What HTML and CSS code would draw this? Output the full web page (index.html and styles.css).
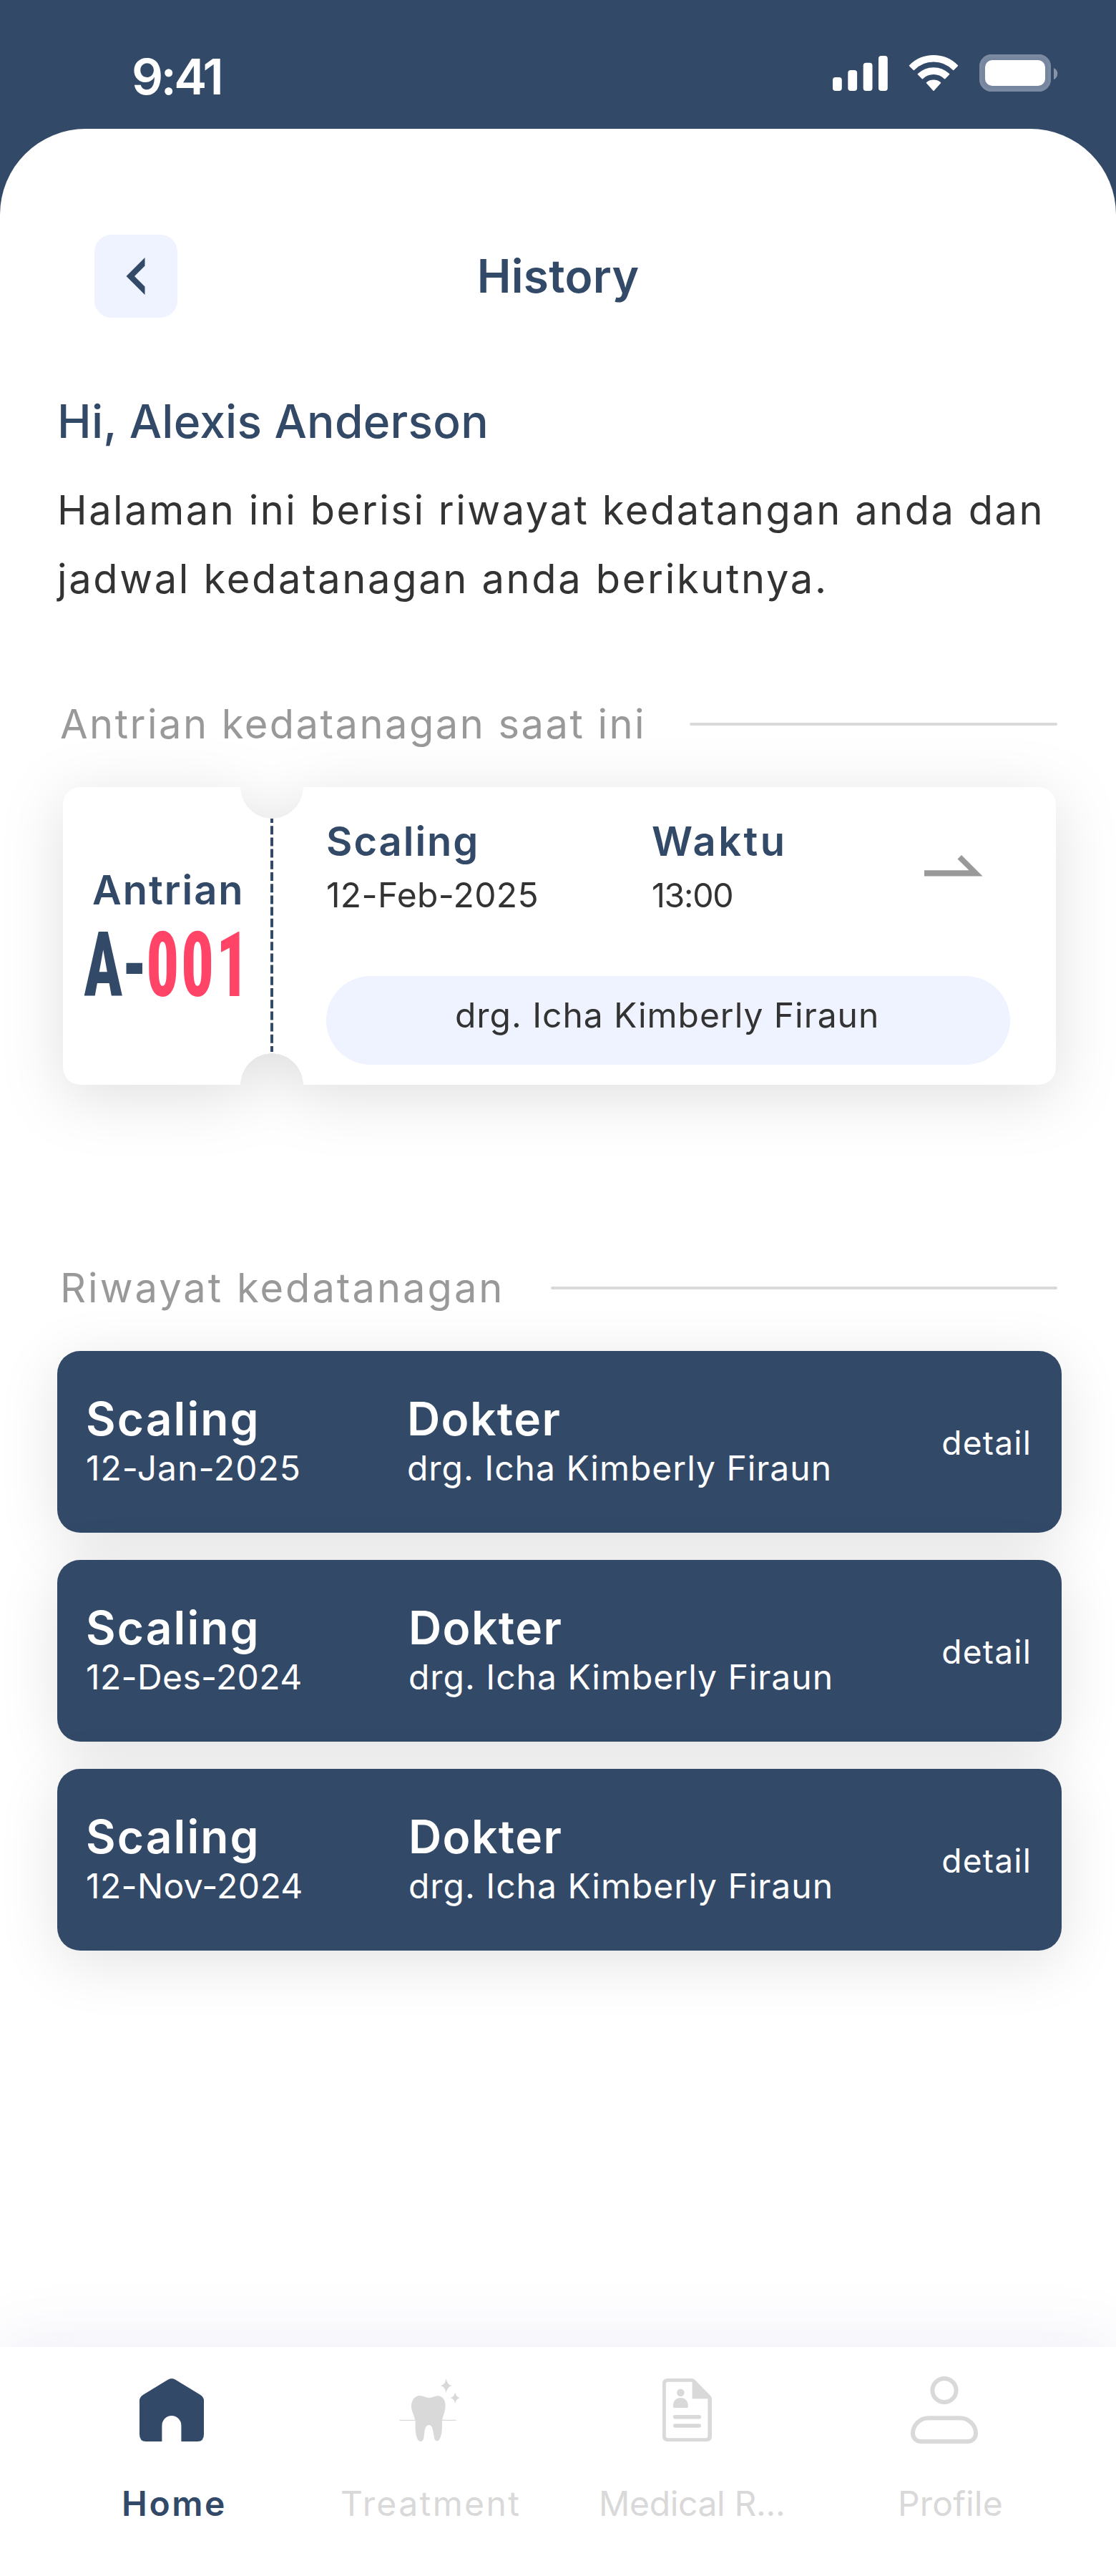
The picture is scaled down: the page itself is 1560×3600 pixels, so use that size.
FILE: index.html
```html
<!DOCTYPE html>
<html lang="id">
<head>
<meta charset="utf-8">
<title>History</title>
<link rel="stylesheet" href="styles.css">
</head>
<body>
<div class="screen">
  <header class="statusbar">
    <span class="clock">9:41</span>
    <div class="status-icons">
      <svg width="77" height="49" viewBox="0 0 77 49" fill="#fff">
        <rect x="0" y="30" width="12.8" height="19" rx="4"/>
        <rect x="21.3" y="20" width="12.8" height="29" rx="4"/>
        <rect x="42.7" y="9.8" width="12.8" height="39.2" rx="4"/>
        <rect x="64" y="0" width="12.8" height="49" rx="4"/>
      </svg>
      <svg width="70" height="51" viewBox="0 0 70 51" fill="#fff" stroke="#fff" stroke-width="1.6" stroke-linejoin="round">
        <path d="M1.6 14.8A47 47 0 0 1 68.4 14.8L62.7 20.4A38.5 38.5 0 0 0 7.3 20.4Z"/>
        <path d="M13.5 26.6A31 31 0 0 1 56.5 26.6L50.6 32.6A22.5 22.5 0 0 0 19.4 32.6Z"/>
        <path d="M25.6 38.6A15 15 0 0 1 44.4 38.6L35 49.2Z"/>
      </svg>
      <svg width="110" height="52" viewBox="0 0 110 52">
        <rect width="100" height="52" rx="17" fill="#76869e"/>
        <rect x="2" y="2" width="96" height="48" rx="15" fill="none" stroke="#7b8aa2" stroke-width="4"/>
        <rect x="8" y="8" width="84" height="36" rx="10" fill="#fff"/>
        <path d="M104 19C111 22 111 32 104 35.3Z" fill="#8793a8"/>
      </svg>
    </div>
  </header>

  <main class="sheet">
    <div class="topbar">
      <button class="back" aria-label="Kembali">
        <svg width="27" height="52" viewBox="0 0 27 52" fill="#334968"><path d="M26.5 0L0.5 26L26.5 52V40.5L12 26L26.5 11.5Z"/></svg>
      </button>
      <h1 class="title">History</h1>
    </div>

    <h2 class="greeting">Hi, Alexis Anderson</h2>
    <p class="intro">
      <span class="intro-first">Halaman ini berisi riwayat kedatangan anda dan</span>
      <span class="intro-second">jadwal kedatanagan anda berikutnya.</span>
    </p>

    <div class="section-head section-head-current">
      <h3 class="section-title">Antrian kedatanagan saat ini</h3>
      <span class="rule"></span>
    </div>

    <div class="ticket-shadow">
      <section class="ticket">
        <div class="stub">
          <div class="stub-label">Antrian</div>
          <div class="queue">A-<span class="queue-number">001</span></div>
        </div>
        <svg class="perforation" width="4" height="328" viewBox="0 0 4 328"><path d="M2 0V328" stroke="#334968" stroke-width="4" stroke-dasharray="12 4.2" stroke-dashoffset="4"/></svg>
        <div class="ticket-body">
          <div class="ticket-row">
            <div>
              <div class="ticket-label label-scaling">Scaling</div>
              <div class="ticket-value">12-Feb-2025</div>
            </div>
            <div>
              <div class="ticket-label label-waktu">Waktu</div>
              <div class="ticket-value value-time">13:00</div>
            </div>
            <svg class="arrow" width="82" height="30" viewBox="0 0 82 30" fill="#999"><path d="M0 21.2H62.5L46.5 5.6L52 0L81.5 29.4H0Z"/></svg>
          </div>
          <div class="pill">drg. Icha Kimberly Firaun</div>
        </div>
      </section>
    </div>

    <div class="section-head section-head-past">
      <h3 class="section-title section-title-wide">Riwayat kedatanagan</h3>
      <span class="rule"></span>
    </div>

    <div class="visits">
      <article class="visit">
        <div>
          <div class="visit-title visit-scaling">Scaling</div>
          <div class="visit-sub date-jan">12-Jan-2025</div>
        </div>
        <div>
          <div class="visit-title visit-dokter">Dokter</div>
          <div class="visit-sub visit-name">drg. Icha Kimberly Firaun</div>
        </div>
        <a class="detail">detail</a>
      </article>
      <article class="visit visit-wide">
        <div>
          <div class="visit-title visit-scaling">Scaling</div>
          <div class="visit-sub">12-Des-2024</div>
        </div>
        <div>
          <div class="visit-title visit-dokter">Dokter</div>
          <div class="visit-sub visit-name">drg. Icha Kimberly Firaun</div>
        </div>
        <a class="detail">detail</a>
      </article>
      <article class="visit visit-wide">
        <div>
          <div class="visit-title visit-scaling">Scaling</div>
          <div class="visit-sub">12-Nov-2024</div>
        </div>
        <div>
          <div class="visit-title visit-dokter">Dokter</div>
          <div class="visit-sub visit-name">drg. Icha Kimberly Firaun</div>
        </div>
        <a class="detail">detail</a>
      </article>
    </div>

    <nav class="tabs">
      <a class="tab tab-home">
        <span class="tab-icon">
          <svg width="90" height="88" viewBox="0 0 90 88" fill="#334968"><path d="M39.5 1.8Q45 -1.6 50.5 1.8L84.5 22.6Q90 26 90 31V78Q90 88 81 88H58.4V66A13.5 14 0 0 0 31.4 66V88H9Q0 88 0 78V31Q0 26 5.5 22.6Z"/></svg>
        </span>
        <span class="tab-label">Home</span>
      </a>
      <a class="tab tab-treatment">
        <span class="tab-icon">
          <svg width="85" height="88" viewBox="0 0 85 88" fill="#d9d9d9">
            <path d="M.4 58.4H22.6M60 58.4H79.5" stroke="#d9d9d9" stroke-width="1.2"/>
            <path d="M17 38.5C17 30 22 24 29 24C34 24 37 27 42 27C47 27 50 24.3 54 24.3C61 24.3 64.6 31 64.6 38C64.6 46 61 52 60 59.5V66C60 75 58 87.4 53 87.4C49 87.4 48.6 81 48 77C47 71 46 65 41.7 65C37 65 36 71 35.3 75C34.6 81 34.5 88 30 88C24.5 88 22.6 76 22.6 67V59.5C21 51 17 46 17 38.5Z"/>
            <path d="M65.7 0C66.8 6 69 9 73.8 10.1C69 11.4 66.8 14.5 65.7 20.3C64.6 14.5 62.4 11.4 57.5 10.1C62.4 9 64.6 6 65.7 0Z"/>
            <path d="M78.3 19C79.2 23.5 81 26.2 85 27C81 28 79.2 30.6 78.3 35C77.4 30.6 75.4 28 71.4 27C75.4 26.2 77.4 23.5 78.3 19Z"/>
          </svg>
        </span>
        <span class="tab-label">Treatment</span>
      </a>
      <a class="tab tab-medical">
        <span class="tab-icon">
          <svg width="69" height="88" viewBox="0 0 69 88" fill="#d9d9d9">
            <path fill-rule="evenodd" d="M7 0H41.5Q44.5 0 46 2.5L67.5 24.5Q69 26 69 28.5V81Q69 88 62 88H7Q0 88 0 81V7Q0 0 7 0ZM41.6 4.8H7.5Q4.8 4.8 4.8 7.5V80.5Q4.8 83.2 7.5 83.2H60.7Q63.4 83.2 63.4 80.5V28.2H41.6Z"/>
            <circle cx="25.4" cy="19.7" r="5.3"/>
            <path d="M15 37.5C15 31 19.5 27 25.3 27C31 27 35.8 31 35.8 37.5V39.5Q35.8 41 34.3 41H16.5Q15 41 15 39.5Z"/>
            <rect x="15" y="51" width="39" height="5.4" rx="2.4"/>
            <rect x="15" y="63.3" width="39" height="5.4" rx="2.4"/>
          </svg>
        </span>
        <span class="tab-label">Medical R...</span>
      </a>
      <a class="tab tab-profile">
        <span class="tab-icon">
          <svg width="94" height="96" viewBox="0 0 94 96" fill="none" stroke="#d9d9d9" stroke-width="6">
            <circle cx="47" cy="20.5" r="16.6"/>
            <path d="M25 59.2H69C81 59.2 91 69 91 80.5C91 87.5 86 92 79.5 92H14.5C8 92 3 87.5 3 80.5C3 69 13 59.2 25 59.2Z"/>
          </svg>
        </span>
        <span class="tab-label">Profile</span>
      </a>
    </nav>
  </main>
</div>
</body>
</html>
```
FILE: styles.css
```css
* { box-sizing: border-box; }

body {
  margin: 0;
  background: #334968;
  font-family: Inter, "Liberation Sans", sans-serif;
  color: #333;
}

h1, h2, h3, p { margin: 0; }

svg { display: block; flex: none; }

.screen {
  display: flex;
  flex-direction: column;
  width: 1560px;
  height: 3600px;
  overflow: hidden;
  background: #334968;
}

.statusbar {
  display: flex;
  justify-content: space-between;
  height: 180px;
  padding: 67px 81px 0 184px;
}

.clock {
  font-size: 69px;
  font-weight: 600;
  line-height: 80px;
  letter-spacing: -3.5px;
  color: #fff;
}

.status-icons {
  display: flex;
  align-items: center;
  gap: 29px;
  height: 52px;
  margin-top: 9px;
}

.sheet {
  display: flex;
  flex-direction: column;
  flex: 1;
  padding-top: 148px;
  border-radius: 120px 120px 0 0;
  background: #fff;
}

.topbar {
  display: grid;
  grid-template-columns: 116px 1fr 116px;
  align-items: center;
  padding: 0 132px;
}

.back {
  display: flex;
  align-items: center;
  width: 116px;
  height: 116px;
  padding: 0 0 0 44px;
  border: 0;
  border-radius: 24px;
  background: #eff3ff;
}

.title {
  font-size: 64px;
  font-weight: 600;
  line-height: 116px;
  letter-spacing: 0.3px;
  text-align: center;
  color: #334968;
}

.greeting {
  margin: 97px 0 0 80px;
  font-size: 64px;
  font-weight: 500;
  line-height: 96px;
  letter-spacing: 0.26px;
  color: #334968;
}

.intro {
  margin: 28px 0 0 80px;
  font-size: 56px;
  line-height: 96px;
  white-space: nowrap;
}

.intro span { display: block; }
.intro-first { letter-spacing: 2.53px; }
.intro-second { letter-spacing: 2.66px; }

.section-head {
  display: flex;
  align-items: center;
  height: 84px;
  padding: 0 82px 0 84px;
}

.section-head-current { margin-top: 113px; }
.section-head-past { margin-top: 242px; }

.section-title {
  width: 880px;
  font-size: 56px;
  font-weight: 400;
  line-height: 84px;
  letter-spacing: 2.48px;
  white-space: nowrap;
  color: #999;
}

.section-title-wide {
  width: 686px;
  letter-spacing: 3.02px;
}

.rule {
  flex: 1;
  height: 4px;
  border-radius: 2px;
  background: #d9d9d9;
}

.ticket-shadow {
  margin: 46px 84px 0 88px;
  filter: drop-shadow(0 16px 42px rgba(0, 0, 0, 0.125));
}

/* The two half circles are cut out where the stub tears off. */
.ticket {
  display: flex;
  height: 416px;
  border-radius: 24px;
  background: #fff;
  -webkit-mask:
    radial-gradient(circle 44px at 292px 0, transparent 43.5px, #000 44px) top / 100% 50% no-repeat,
    radial-gradient(circle 44px at 292px 100%, transparent 43.5px, #000 44px) bottom / 100% 50% no-repeat;
  mask:
    radial-gradient(circle 44px at 292px 0, transparent 43.5px, #000 44px) top / 100% 50% no-repeat,
    radial-gradient(circle 44px at 292px 100%, transparent 43.5px, #000 44px) bottom / 100% 50% no-repeat;
}

.stub {
  width: 290px;
  padding-top: 112px;
  color: #334968;
}

.stub-label {
  padding-left: 41px;
  font-size: 56px;
  font-weight: 600;
  line-height: 64px;
  letter-spacing: 2px;
}

.queue {
  margin: 13px 0 0 29px;
  font-family: "Roboto Condensed", Roboto, sans-serif;
  font-size: 126px;
  font-weight: 800;
  line-height: 120px;
  letter-spacing: -2px;
  white-space: nowrap;
  transform: scaleX(0.72);
  transform-origin: left;
}

.queue-number {
  letter-spacing: 4px;
  color: #ff4468;
}

.perforation { margin-top: 42px; }

.ticket-body {
  flex: 1;
  padding: 40px 64px 28px 74px;
}

.ticket-row {
  display: grid;
  grid-template-columns: 455px 381px auto;
  justify-content: start;
}

.ticket-label {
  font-size: 56px;
  font-weight: 600;
  line-height: 72px;
  color: #334968;
}

.label-scaling { letter-spacing: 2px; }
.label-waktu { letter-spacing: 3.5px; }

.ticket-value {
  margin-top: 7px;
  font-size: 48px;
  line-height: 64px;
  letter-spacing: 0.35px;
}

.value-time {
  font-size: 46.5px;
  letter-spacing: -1.3px;
}

.arrow { margin-top: 55px; }

.pill {
  height: 124px;
  margin-top: 81px;
  padding: 23px 0 0 180px;
  border-radius: 62px;
  background: #eff3ff;
  font-size: 48px;
  line-height: 64px;
  letter-spacing: 0.95px;
}

.visits {
  display: flex;
  flex-direction: column;
  gap: 38px;
  margin: 46px 76px 0 80px;
}

.visit {
  display: grid;
  grid-template-columns: 449px 1fr auto;
  height: 254px;
  padding: 60px 42px 0 40px;
  border-radius: 32px;
  background: #334968;
  box-shadow: 0 16px 84px rgba(0, 0, 0, 0.115);
  color: #fff;
}

.visit-wide { grid-template-columns: 451px 1fr auto; }

.visit-title {
  font-size: 64px;
  font-weight: 600;
  line-height: 69px;
}

.visit-scaling { letter-spacing: 2.1px; }
.visit-dokter { letter-spacing: 1.4px; }

.visit-sub {
  margin-top: 6px;
  font-size: 48px;
  line-height: 58px;
  letter-spacing: 0.38px;
}

.date-jan { letter-spacing: 1px; }
.visit-name { letter-spacing: 0.98px; }

.detail {
  margin-top: 39px;
  font-size: 46px;
  line-height: 58px;
  letter-spacing: 1.21px;
}

.tabs {
  display: grid;
  grid-template-columns: repeat(4, 360px);
  justify-content: center;
  height: 320px;
  margin-top: auto;
  padding-top: 40px;
  background: #fff;
  box-shadow: 0 0 90px rgba(90, 90, 180, 0.12);
}

.tab {
  display: flex;
  flex-direction: column;
  color: #d9d9d9;
}

.tab-icon {
  display: flex;
  align-items: center;
  justify-content: center;
  height: 96px;
}

.tab-label {
  margin-top: 51px;
  font-size: 48px;
  line-height: 64px;
  white-space: nowrap;
}

.tab-home .tab-label {
  padding-left: 110px;
  font-weight: 600;
  letter-spacing: 2.6px;
  color: #334968;
}

.tab-treatment .tab-label { padding-left: 56px; letter-spacing: 2.4px; }
.tab-medical .tab-label { padding-left: 57px; letter-spacing: -0.35px; }
.tab-profile .tab-label { padding-left: 115px; letter-spacing: 0.15px; }
```
